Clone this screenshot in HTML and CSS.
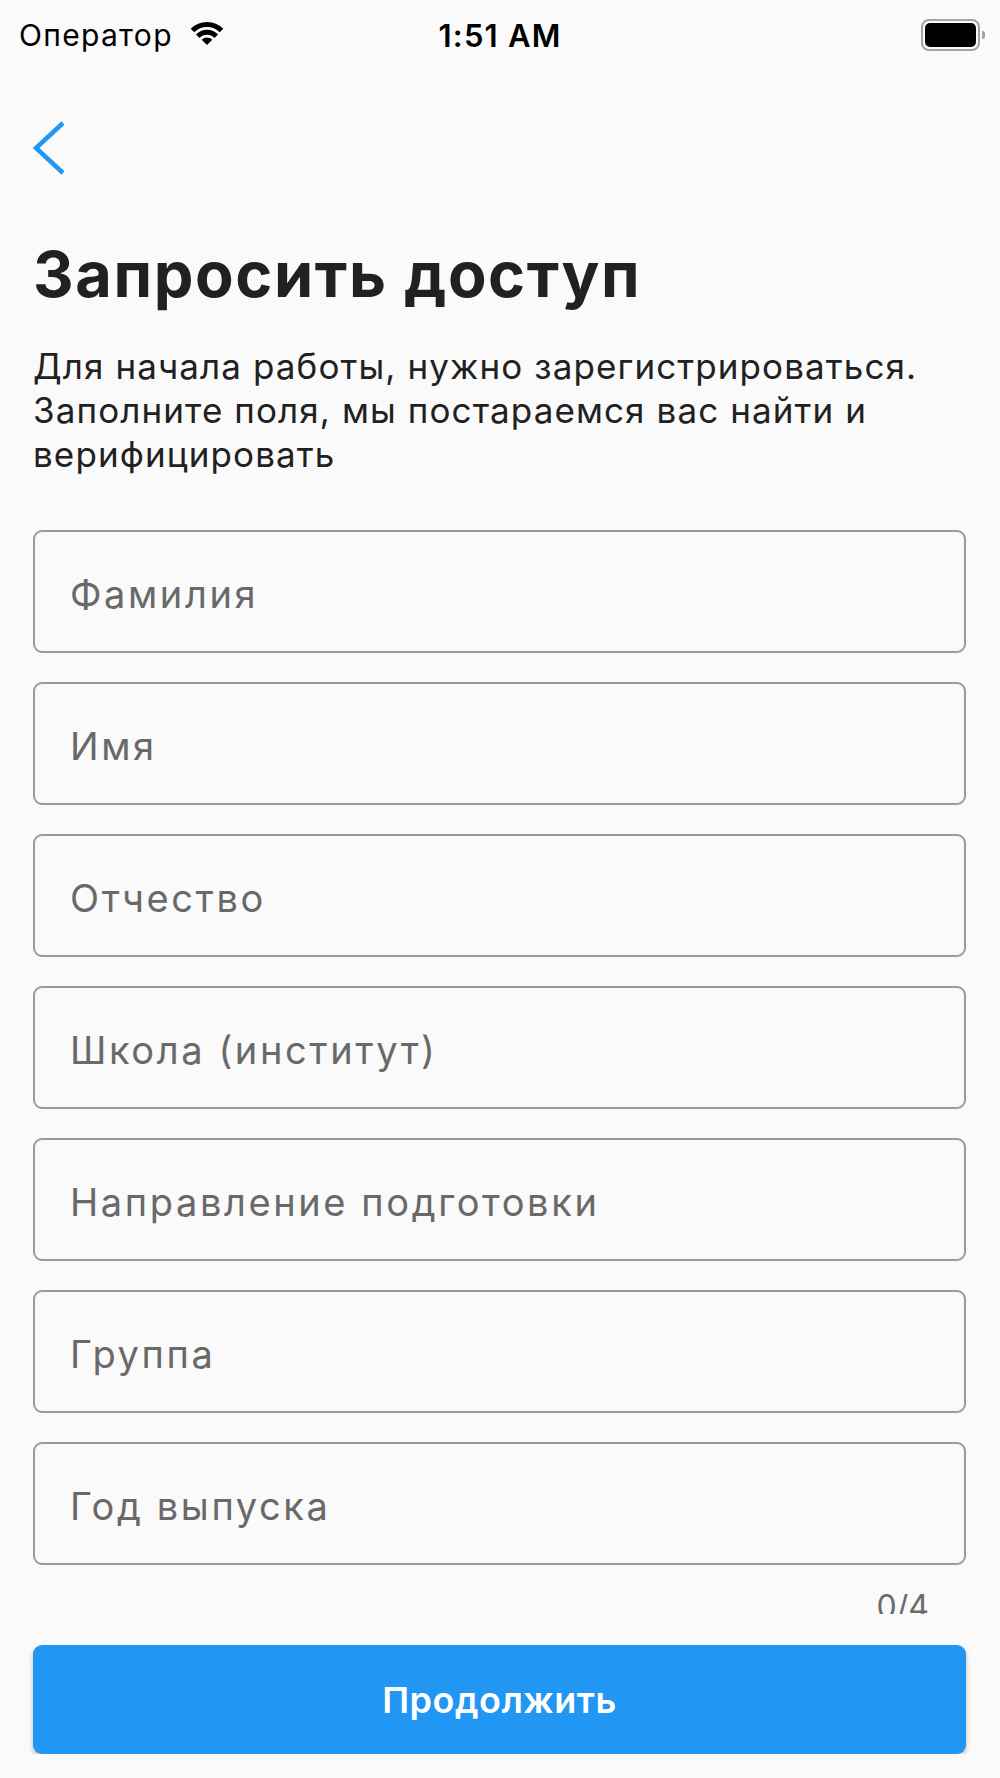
FILE: index.html
```html
<!DOCTYPE html>
<html lang="ru">
<head>
    <meta charset="UTF-8">
    <meta name="viewport" content="width=device-width, initial-scale=1.0">
    <title>Запросить доступ</title>
    <link rel="stylesheet" href="styles.css">
</head>
<body>
    <div class="status-bar">
        <div class="status-left">
            <span class="carrier">Оператор</span>
            <svg class="wifi" width="40" height="26" viewBox="0 0 40 26">
                <path d="M5.5 10.5 A20.5 20.5 0 0 1 34.5 10.5" fill="none" stroke="#000" stroke-width="5"/>
                <path d="M10.8 16.3 A12.5 12.5 0 0 1 29.2 16.3" fill="none" stroke="#000" stroke-width="5"/>
                <path d="M20 25 L14.7 19.7 A7.5 7.5 0 0 1 25.3 19.7 Z" fill="#000"/>
            </svg>
        </div>
        <span class="time">1:51 AM</span>
        <div class="battery">
            <div class="battery-body"><div class="battery-level"></div></div>
            <div class="battery-cap"></div>
        </div>
    </div>

    <div class="screen">
        <button type="button" class="btn-back" aria-label="Назад">
            <svg width="34" height="56" viewBox="0 0 34 56">
                <polyline points="30,3 3,28 30,53" fill="none" stroke="#2196f3" stroke-width="4.5"/>
            </svg>
        </button>

        <h1>Запросить доступ</h1>
        <p class="intro">Для начала работы, нужно зарегистрироваться. Заполните поля, мы постараемся вас найти и верифицировать</p>

        <form class="fields">
            <input type="text" class="field" name="last_name" placeholder="Фамилия">
            <input type="text" class="field" name="first_name" placeholder="Имя">
            <input type="text" class="field" name="middle_name" placeholder="Отчество">
            <input type="text" class="field" name="school" placeholder="Школа (институт)">
            <input type="text" class="field" name="program" placeholder="Направление подготовки">
            <input type="text" class="field" name="group" placeholder="Группа">
            <input type="text" class="field" name="year" placeholder="Год выпуска">
            <div class="counter">0/4</div>
            <button type="submit" class="btn-primary">Продолжить</button>
        </form>
    </div>
</body>
</html>
```

FILE: styles.css
```css
body { margin: 0; background: #fafafa; font-family: Inter, Roboto, sans-serif; color: #212121; }

.status-bar { height: 70px; display: flex; align-items: center; justify-content: space-between; padding: 0 15px 0 19px; position: relative; }
.status-left { display: flex; align-items: center; gap: 14px; }
.carrier { font-size: 30px; letter-spacing: 1.3px; color: #000; }
.wifi { margin-top: -4px; }
.time { position: absolute; left: 0; right: 0; text-align: center; font-size: 31px; letter-spacing: 1.2px; font-weight: 600; color: #000; pointer-events: none; }
.battery { display: flex; align-items: center; gap: 2px; }
.battery-body { width: 51px; height: 24px; border: 2.5px solid #a3a3a3; border-radius: 8px; padding: 2px; }
.battery-level { height: 100%; background: #000; border-radius: 5px; }
.battery-cap { width: 3px; height: 8px; background: #a3a3a3; border-radius: 0 2px 2px 0; }

.screen { padding: 0 34px 0 33px; }
.btn-back { display: block; background: none; border: none; padding: 0; margin: 50px 0 0 0; cursor: pointer; }
.btn-back svg { display: block; }

h1 { font-size: 63px; font-weight: 700; letter-spacing: 1.6px; margin: 58px 0 0 0; line-height: 80px; }
.intro { font-size: 35px; letter-spacing: 1.1px; line-height: 44px; margin: 30px 0 0 0; }

.fields { display: flex; flex-direction: column; gap: 29px; margin-top: 54px; }
.field {
    box-sizing: border-box; height: 123px; width: 100%; padding: 4px 35px 0; margin: 0;
    border: 2.5px solid #9a9a9a; border-radius: 9px; background: transparent;
    font-family: inherit; font-size: 38px; letter-spacing: 2.6px; color: #212121; outline: none;
}
.field::placeholder { color: #696969; }

.counter { align-self: flex-end; margin: 0 37px 0 0; height: 20px; overflow: hidden; font-size: 32px; line-height: 26px; color: #6b6b6b; }
.btn-primary {
    height: 109px; margin-top: 2px; border: none; border-radius: 9px; background: #2196f3;
    color: #fff; font-family: inherit; font-size: 36px; font-weight: 600; letter-spacing: 0.5px; cursor: pointer;
    box-shadow: 0 3px 5px rgba(0, 0, 0, 0.25);
}
```
